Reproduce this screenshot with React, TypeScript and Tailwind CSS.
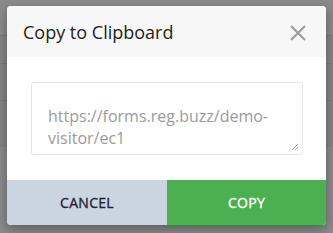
import React from "react";

export default function App() {
  return (
    <div className="relative w-[333px] h-[233px] overflow-hidden bg-[#8b8b8b]" style={{ fontFamily: '"Open Sans", "Noto Sans", sans-serif' }}>
      {/* page behind overlay */}
      <div className="flex flex-col">
        <div className="h-[36px] border-b border-[#7a7a7a]" />
        <div className="h-[28px] bg-[#858585] border-b border-[#7a7a7a]" />
        <div className="h-[37px] bg-[#858585] border-b border-[#7a7a7a]" />
        <div className="h-[46px] bg-[#858585]" />
      </div>
      {/* modal */}
      <div className="absolute left-[7px] top-[6px] w-[319px] rounded-[4px] overflow-hidden bg-white shadow-[0_4px_12px_rgba(0,0,0,0.35)]">
        <div className="h-[51px] bg-[#f7f7f7] flex items-center justify-between pl-[16px] pr-[20px]">
          <span className="text-[18px] text-[#222] leading-none">Copy to Clipboard</span>
          <svg width="16" height="16" viewBox="0 0 16 16" className="mt-[2px]">
            <path d="M1 1 L15 15 M15 1 L1 15" stroke="#9a9a9a" strokeWidth="2" />
          </svg>
        </div>
        <div className="h-[123px] pt-[25px] pl-[24px] pr-[23px]">
          <div className="relative h-[73px] border border-[#e3e6ea] rounded-[3px] pl-[16px] pr-[8px] pt-[22px]">
            <div className="text-[16px] leading-[22px] text-[#9b9b9b] whitespace-nowrap">
              https://forms.reg.buzz/demo-<br />visitor/ec1
            </div>
            <svg width="8" height="8" viewBox="0 0 8 8" className="absolute right-[3px] bottom-[3px]">
              <path d="M7 1 L1 7 M7 4 L4 7" stroke="#aaa" strokeWidth="1" />
            </svg>
          </div>
        </div>
        <div className="flex h-[45px]">
          <div className="w-[160px] bg-[#cbd5e1] flex items-center justify-center text-[14px] text-[#1f2430] tracking-[0.3px] [-webkit-text-stroke:0.35px_currentColor]">CANCEL</div>
          <div className="flex-1 bg-[#4caf50] flex items-center justify-center text-[14px] text-white tracking-[0.3px] [-webkit-text-stroke:0.35px_currentColor]">COPY</div>
        </div>
      </div>
    </div>
  );
}
